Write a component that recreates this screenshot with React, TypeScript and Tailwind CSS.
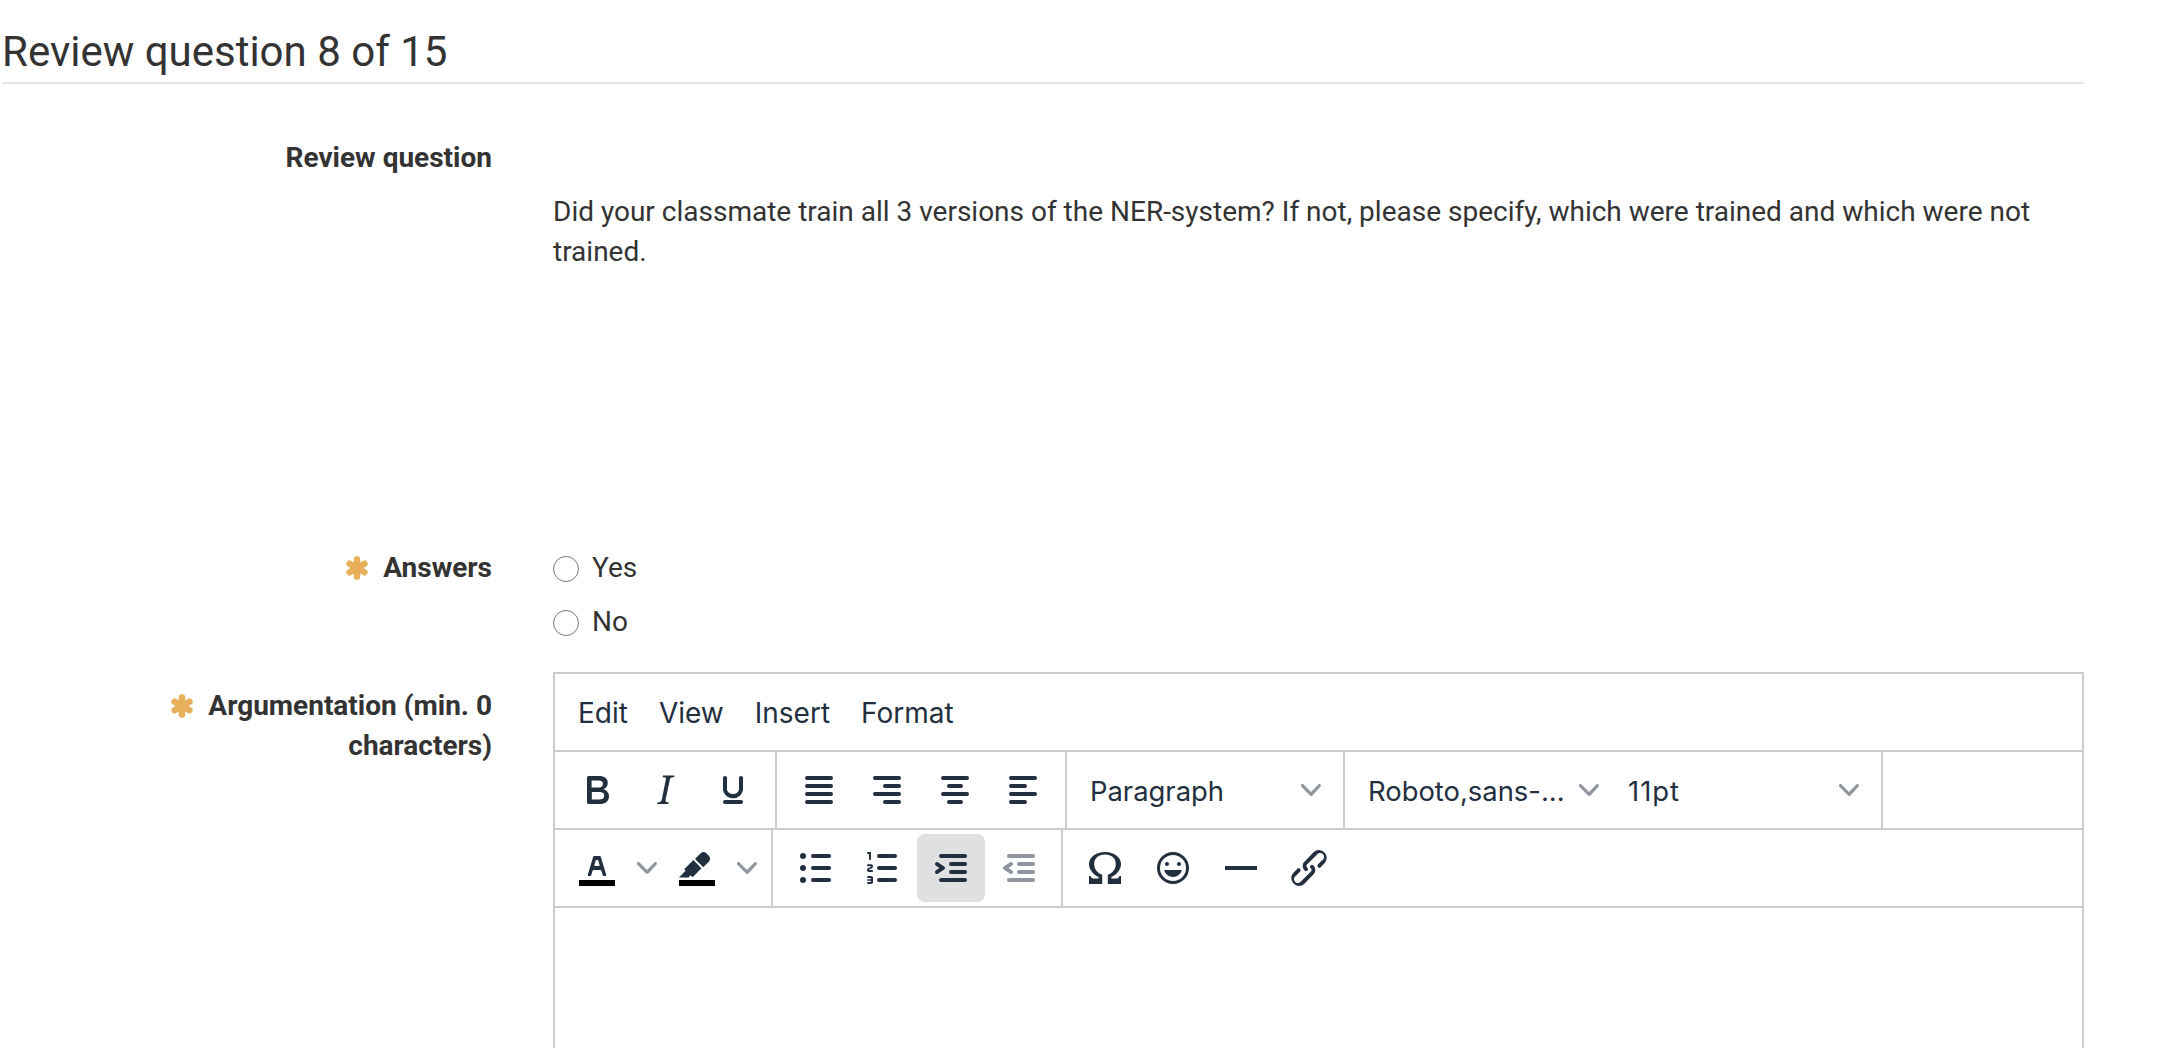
import React from 'react';

const INK = '#222f3e';

const Icon: React.FC<{ d: string; faded?: boolean; bar?: boolean }> = ({ d, faded, bar }) => (
    <svg viewBox="0 0 24 24" className={faded ? 'w-12 h-12 opacity-50' : 'w-12 h-12'} fill={INK} fillRule="evenodd">
        {bar && <path d="M3 18h18v3H3z" fill="#000" />}
        <path d={d} />
    </svg>
);

const lines = (rows: [number, number, number][]) =>
    rows.map(([x1, x2, y]) => `M${x1 + 1} ${y - 1}H${x2 - 1}a1 1 0 010 2H${x1 + 1}a1 1 0 010-2z`).join('');

const icons = {
    bold: 'M7.8 19c-.3 0-.5 0-.6-.2l-.2-.5V5.7c0-.2 0-.4.2-.5l.6-.2h5c1.5 0 2.7.3 3.5 1 .7.6 1.1 1.4 1.1 2.5a3 3 0 01-.6 1.9c-.4.6-1 1-1.6 1.2.4.1.9.3 1.3.6s.8.7 1 1.2c.4.4.5 1 .5 1.6 0 1.3-.4 2.3-1.3 3-.8.7-2.1 1-3.8 1H7.8zm5-8.3c.6 0 1.2-.1 1.6-.5.4-.3.6-.7.6-1.3 0-1.1-.8-1.7-2.3-1.7H9.3v3.5h3.4zm.5 6c.7 0 1.3-.1 1.7-.4.4-.4.6-.9.6-1.5s-.2-1-.7-1.4c-.4-.3-1-.4-2-.4H9.4v3.8h4z',
    italic: 'M16.7 4.7l-.1.9h-.3c-.6 0-1 0-1.4.3-.3.3-.4.6-.5 1.1l-2.1 9.8v.6c0 .5.4.8 1.4.8h.2l-.2.8H8l.2-.8h.2c1.1 0 1.8-.5 2-1.5l2-9.8.1-.5c0-.6-.4-.8-1.4-.8h-.3l.2-.9h5.8z',
    underline: 'M16 5c.6 0 1 .4 1 1v5.5a4 4 0 01-.4 1.8l-1 1.4a5.3 5.3 0 01-5.5 1 5 5 0 01-1.6-1c-.5-.4-.8-.9-1.1-1.4a4 4 0 01-.4-1.8V6c0-.6.4-1 1-1s1 .4 1 1v5.5c0 .3 0 .6.2 1l.6.7a3.3 3.3 0 002.2.8 3.4 3.4 0 002.2-.8c.3-.2.4-.5.6-.8l.2-.9V6c0-.6.4-1 1-1zM8 17h8c.6 0 1 .4 1 1s-.4 1-1 1H8a1 1 0 010-2z',
    justify: lines([[5, 19, 6], [5, 19, 10], [5, 19, 14], [5, 19, 18]]),
    right: lines([[5, 19, 6], [10, 19, 10], [5, 19, 14], [10, 19, 18]]),
    center: lines([[5, 19, 6], [8, 16, 10], [5, 19, 14], [8, 16, 18]]),
    left: lines([[5, 19, 6], [5, 14, 10], [5, 19, 14], [5, 14, 18]]),
    textColor: 'M8.7 16h-.8a.5.5 0 01-.5-.6l2.7-9c.1-.3.3-.4.5-.4h2.8c.2 0 .4.1.5.4l2.7 9a.5.5 0 01-.5.6h-.8a.5.5 0 01-.4-.4l-.7-2.2c0-.3-.3-.4-.5-.4h-3.4c-.2 0-.4.1-.5.4l-.7 2.2c0 .3-.2.4-.4.4zm2.6-7.6l-.6 2a.5.5 0 00.5.6h1.6a.5.5 0 00.5-.6l-.6-2c0-.3-.3-.4-.5-.4h-.4c-.2 0-.4.1-.5.4z',
    highlight: 'M7.7 16.7H3l3.3-3.3-.7-.8L10.2 8l4 4.1-4 4.2c-.2.2-.6.2-.8 0l-.6-.7-1.1 1.1zm5-7.5L11 7.4l3-2.9a2 2 0 012.6 0L18 6c.7.7.7 2 0 2.7l-2.9 2.9-1.8-1.8-.5-.6',
    bullist: 'M11 5h8c.6 0 1 .4 1 1s-.4 1-1 1h-8a1 1 0 010-2zm0 6h8c.6 0 1 .4 1 1s-.4 1-1 1h-8a1 1 0 010-2zm0 6h8c.6 0 1 .4 1 1s-.4 1-1 1h-8a1 1 0 010-2zM4.5 6c0-.4.1-.8.4-1 .3-.4.7-.5 1.1-.5s.8.1 1 .4c.4.3.5.7.5 1.1s-.1.8-.4 1c-.3.4-.7.5-1.1.5s-.8-.1-1-.4c-.4-.3-.5-.7-.5-1.1zm0 6c0-.4.1-.8.4-1 .3-.4.7-.5 1.1-.5s.8.1 1 .4c.4.3.5.7.5 1.1s-.1.8-.4 1c-.3.4-.7.5-1.1.5s-.8-.1-1-.4c-.4-.3-.5-.7-.5-1.1zm0 6c0-.4.1-.8.4-1 .3-.4.7-.5 1.1-.5s.8.1 1 .4c.4.3.5.7.5 1.1s-.1.8-.4 1c-.3.4-.7.5-1.1.5s-.8-.1-1-.4c-.4-.3-.5-.7-.5-1.1z',
    numlist: 'M10 17h8c.6 0 1 .4 1 1s-.4 1-1 1h-8a1 1 0 010-2zm0-6h8c.6 0 1 .4 1 1s-.4 1-1 1h-8a1 1 0 010-2zm0-6h8c.6 0 1 .4 1 1s-.4 1-1 1h-8a1 1 0 110-2zM6 4v3.5c0 .3-.2.5-.5.5a.5.5 0 01-.5-.5V5h-.5a.5.5 0 010-1H6zm-1 8.8l.2.2h1.3c.3 0 .5.2.5.5s-.2.5-.5.5H4.9a1 1 0 01-.9-1V13c0-.4.3-.8.6-1l1.2-.4.2-.3a.2.2 0 00-.2-.2H4.5a.5.5 0 01-.5-.5c0-.3.2-.5.5-.5h1.6c.5 0 .9.4.9 1v.1c0 .4-.3.8-.6 1l-1.2.4-.2.3zM7 17v2c0 .6-.4 1-1 1H4.5a.5.5 0 010-1h1.2c.2 0 .3-.1.3-.3 0-.2-.1-.3-.3-.3H4.4a.4.4 0 110-.8h1.3c.2 0 .3-.1.3-.3 0-.2-.1-.3-.3-.3H4.5a.5.5 0 110-1H6c.6 0 1 .4 1 1z',
    indent: 'M7 5h12c.6 0 1 .4 1 1s-.4 1-1 1H7a1 1 0 110-2zm5 4h7c.6 0 1 .4 1 1s-.4 1-1 1h-7a1 1 0 010-2zm0 4h7c.6 0 1 .4 1 1s-.4 1-1 1h-7a1 1 0 010-2zm-5 4h12a1 1 0 010 2H7a1 1 0 010-2zm-2.6-3.8L6.2 12l-1.8-1.2a1 1 0 011.2-1.6l3 2a1 1 0 010 1.6l-3 2a1 1 0 11-1.2-1.6z',
    outdent: 'M7 5h12c.6 0 1 .4 1 1s-.4 1-1 1H7a1 1 0 110-2zm5 4h7c.6 0 1 .4 1 1s-.4 1-1 1h-7a1 1 0 010-2zm0 4h7c.6 0 1 .4 1 1s-.4 1-1 1h-7a1 1 0 010-2zm-5 4h12a1 1 0 010 2H7a1 1 0 010-2zm1.6-3.8a1 1 0 01-1.2 1.6l-3-2a1 1 0 010-1.6l3-2a1 1 0 011.2 1.6L6.8 12l1.8 1.2z',
    charmap: 'M4 20v-4h.8c.2.7.6 1.2 1.4 1.2h2.6v-.7C6 15.2 4 12.7 4 10 4 6.5 7.5 4 12 4s8 2.5 8 6c0 2.7-2 5.2-4.8 6.5v.7h2.6c.8 0 1.2-.5 1.4-1.2h.8v4h-6.6v-4.6C16 14.4 17.4 12.5 17.4 10c0-2.9-2.2-4.7-5.4-4.7S6.6 7.1 6.6 10c0 2.5 1.4 4.4 4 5.4V20z',
    emoji: 'M9 11c.6 0 1-.4 1-1s-.4-1-1-1a1 1 0 00-1 1c0 .6.4 1 1 1zm6 0c.6 0 1-.4 1-1s-.4-1-1-1a1 1 0 00-1 1c0 .6.4 1 1 1zm-3 5.5c2.1 0 4-1.5 4.4-3.5H7.6c.5 2 2.3 3.5 4.4 3.5zM12 4a8 8 0 100 16 8 8 0 000-16zm0 14.5a6.5 6.5 0 110-13 6.5 6.5 0 010 13z',
    hr: 'M4 11h16v2H4z',
    link: 'M6.2 12.3a1 1 0 011.4 1.4l-2 2a2 2 0 102.6 2.8l4.8-4.8a1 1 0 000-1.4 1 1 0 111.4-1.3 2.9 2.9 0 010 4L9.6 20a3.9 3.9 0 01-5.5-5.5l2-2zm11.6-.6a1 1 0 01-1.4-1.4l2-2a2 2 0 10-2.6-2.8L11 10.3a1 1 0 000 1.4A1 1 0 119.6 13a2.9 2.9 0 010-4L14.4 4a3.9 3.9 0 015.5 5.5l-2 2z',
};

const Chevron = () => (
    <svg viewBox="0 0 10 10" className="w-5 h-5 shrink-0 opacity-50" fill={INK}>
        <path d="M8.7 2.2c.3-.3.8-.3 1 0 .4.4.4.9 0 1.2L5.7 7.8c-.3.3-.9.3-1.2 0L.2 3.4a.8.8 0 010-1.2c.3-.3.8-.3 1.1 0L5 6l3.7-3.8z" />
    </svg>
);

const Btn: React.FC<{ d: string; active?: boolean; faded?: boolean }> = ({ d, active, faded }) => (
    <button className={`w-[68px] h-[68px] flex items-center justify-center rounded-lg ${active ? 'bg-[#dee0e2]' : ''}`}>
        <Icon d={d} faded={faded} />
    </button>
);

const Group: React.FC<{ children: React.ReactNode; last?: boolean }> = ({ children, last }) => (
    <div className={`flex items-center px-2 h-full ${last ? '' : 'border-r-2 border-[#ccc]'}`}>{children}</div>
);

const ColorBtn: React.FC<{ d: string }> = ({ d }) => (
    <div className="flex items-center w-[100px] h-[68px] pl-[10px]">
        <Icon d={d} bar />
        <span className="ml-4"><Chevron /></span>
    </div>
);

const Select: React.FC<{ label: string; spaced?: boolean }> = ({ label, spaced }) => (
    <div className="flex items-center justify-between w-[260px] h-[68px] pl-[15px] pr-[14px]">
        <span className={`whitespace-nowrap pt-[2px] text-[27.4px] ${spaced ? 'tracking-[1px]' : ''}`}>{label}</span>
        <Chevron />
    </div>
);

// chunky six-armed required marker
const Required: React.FC = () => (
    <svg viewBox="0 0 24 24" className="inline-block w-6 h-6 mr-[14px] align-[-3px] shrink-0" stroke="#e8b05a" strokeWidth="6.5" strokeLinecap="round">
        <path d="M12 3.5v17M4.6 7.75l14.8 8.5M19.4 7.75l-14.8 8.5" />
    </svg>
);

const Radio: React.FC<{ label: string }> = ({ label }) => (
    <label className="flex items-center h-10 gap-[13px]">
        <input type="radio" name="answers" className="appearance-none w-[26px] h-[26px] mt-[2px] rounded-full border-[1.5px] border-[#767676] bg-white" />
        {label}
    </label>
);

const App: React.FC = () => {
    return (
        <div className="h-[1048px] overflow-hidden bg-white text-[#333] text-[28px] leading-10 font-['Roboto',sans-serif] pl-[2px] w-[2084px]">
            <h1 className="h-[84px] pt-[30px] text-[42px] leading-[44px] font-normal border-b-2 border-[#e6e6e6]">
                Review question 8 of 15
            </h1>

            <div className="grid grid-cols-[490px_1fr] gap-x-[61px] pt-[54px] h-[463px]">
                <div className="font-bold text-right">Review question</div>
                <div className="pt-[54px]">
                    Did your classmate train all 3 versions of the NER-system? If not, please specify, which were trained and which were not trained.
                </div>
            </div>

            <div className="grid grid-cols-[490px_1fr] gap-x-[61px] pt-[1px] h-[125px]">
                <div className="flex items-center justify-end h-10 font-bold">
                    <Required />
                    Answers
                </div>
                <div className="flex flex-col gap-[14px]">
                    <Radio label="Yes" />
                    <Radio label="No" />
                </div>
            </div>

            <div className="grid grid-cols-[490px_1fr] gap-x-[61px]">
                <div className="pl-10 pt-[14px] font-bold text-right">
                    <Required />
                    Argumentation (min. 0 characters)
                </div>
                <div className="border-2 border-[#ccc] h-[500px] text-[#222f3e] font-['Inter',sans-serif]">
                    <div className="flex items-center h-[78px] pl-[23px] pt-[2px] border-b-2 border-[#ccc]">
                        <span className="pr-[31px]">Edit</span>
                        <span className="pr-[31px]">View</span>
                        <span className="pr-[31px]">Insert</span>
                        <span>Format</span>
                    </div>
                    <div className="flex items-center h-[78px] border-b-2 border-[#ccc]">
                        <Group>
                            <Btn d={icons.bold} />
                            <Btn d={icons.italic} />
                            <Btn d={icons.underline} />
                        </Group>
                        <Group>
                            <Btn d={icons.justify} />
                            <Btn d={icons.right} />
                            <Btn d={icons.center} />
                            <Btn d={icons.left} />
                        </Group>
                        <Group>
                            <Select label="Paragraph" />
                        </Group>
                        <div className="flex items-center px-2 h-full border-r-2 border-[#ccc]">
                            <Select label="Roboto,sans-..." />
                            <Select label="11pt" spaced />
                        </div>
                    </div>
                    <div className="flex items-center h-[78px] border-b-2 border-[#ccc]">
                        <Group>
                            <ColorBtn d={icons.textColor} />
                            <ColorBtn d={icons.highlight} />
                        </Group>
                        <Group>
                            <Btn d={icons.bullist} />
                            <Btn d={icons.numlist} />
                            <Btn d={icons.indent} active />
                            <Btn d={icons.outdent} faded />
                        </Group>
                        <Group last>
                            <Btn d={icons.charmap} />
                            <Btn d={icons.emoji} />
                            <Btn d={icons.hr} />
                            <Btn d={icons.link} />
                        </Group>
                    </div>
                </div>
            </div>
        </div>
    );
};

export default App;
